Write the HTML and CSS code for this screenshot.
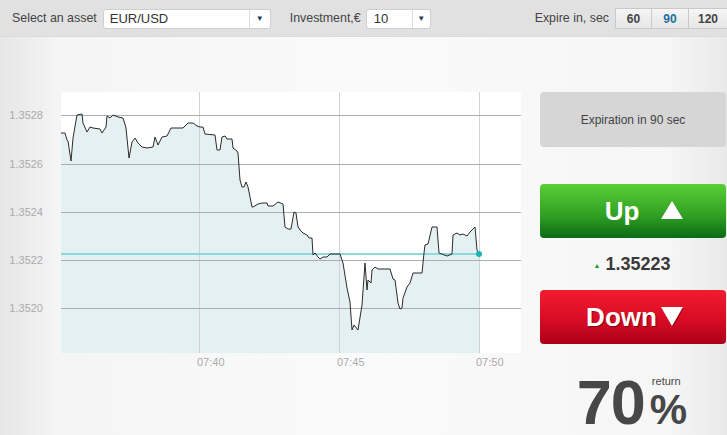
FILE: index.html
```html
<!DOCTYPE html>
<html lang="en">
<head>
  <meta charset="UTF-8">
  <meta name="viewport" content="width=device-width, initial-scale=1.0">
  <title>Binary option</title>
  <link rel="stylesheet" href="styles.css">
</head>
<body>
  <!-- top toolbar -->
  <div class="toolbar">
    <span class="label">Select an asset</span>
    <div class="select select-asset">
      <span class="select-value">EUR/USD</span>
      <span class="select-arrow">&#9660;</span>
    </div>
    <span class="label label-invest">Investment,€</span>
    <div class="select select-invest">
      <span class="select-value">10</span>
      <span class="select-arrow">&#9660;</span>
    </div>
    <span class="label label-expire">Expire in, sec</span>
    <div class="segments">
      <button class="segment">60</button>
      <button class="segment active">90</button>
      <button class="segment">120</button>
    </div>
  </div>

  <div class="main">
    <!-- chart -->
    <div class="chart">
      <svg width="521" height="340" viewBox="0 37 521 340">
        <rect x="61" y="92" width="460" height="261" fill="#fff"/>
        <polygon class="area" points="61,133 65,133 67,140 68,141 71,161 73,138 77,115 82,114 83,123 87,132 90,127 93,128 100,129 102,133 106,127 107,116 110,118 113,115 118,117 123,118 126,128 129,158 132,142 135,138 138,143 142,147 147,148 153,147 155,137 158,145 162,137 167,136 171,128 177,128 183,128 188,123 193,123 197,126 200,127 203,127 205,134 215,135 217,150 220,150 222,137 225,136 227,139 232,139 233,148 237,151 238,153 240,180 242,187 244,187 246,182 248,187 252,207 253,207 258,204 262,203 267,203 268,206 273,206 278,202 283,204 285,227 288,229 291,229 294,212 296,213 298,227 300,230 303,233 307,235 309,238 312,238 313,255 315,253 318,257 320,259 323,257 327,257 330,254 340,254 343,263 347,288 350,302 352,330 354,325 358,330 362,305 365,263 367,290 368,280 371,283 372,270 375,267 378,269 390,269 393,279 395,280 398,303 400,309 402,308 403,298 407,287 410,283 413,273 417,273 422,273 424,253 425,245 428,244 432,227 437,227 439,253 447,256 452,254 453,235 457,233 460,235 463,234 467,236 470,232 475,227 477,250 479,254 479,353 61,353"/>
        <g class="grid-v">
          <line x1="199.5" y1="92" x2="199.5" y2="353"/>
          <line x1="339.5" y1="92" x2="339.5" y2="353"/>
          <line x1="479.5" y1="92" x2="479.5" y2="353"/>
        </g>
        <g class="grid-h">
          <line x1="61" y1="115.5" x2="521" y2="115.5"/>
          <line x1="61" y1="164.5" x2="521" y2="164.5"/>
          <line x1="61" y1="212.5" x2="521" y2="212.5"/>
          <line x1="61" y1="260.5" x2="521" y2="260.5"/>
          <line x1="61" y1="308.5" x2="521" y2="308.5"/>
        </g>
        <line class="current" x1="61" y1="254" x2="479" y2="254"/>
        <polyline class="price" points="61,133 65,133 67,140 68,141 71,161 73,138 77,115 82,114 83,123 87,132 90,127 93,128 100,129 102,133 106,127 107,116 110,118 113,115 118,117 123,118 126,128 129,158 132,142 135,138 138,143 142,147 147,148 153,147 155,137 158,145 162,137 167,136 171,128 177,128 183,128 188,123 193,123 197,126 200,127 203,127 205,134 215,135 217,150 220,150 222,137 225,136 227,139 232,139 233,148 237,151 238,153 240,180 242,187 244,187 246,182 248,187 252,207 253,207 258,204 262,203 267,203 268,206 273,206 278,202 283,204 285,227 288,229 291,229 294,212 296,213 298,227 300,230 303,233 307,235 309,238 312,238 313,255 315,253 318,257 320,259 323,257 327,257 330,254 340,254 343,263 347,288 350,302 352,330 354,325 358,330 362,305 365,263 367,290 368,280 371,283 372,270 375,267 378,269 390,269 393,279 395,280 398,303 400,309 402,308 403,298 407,287 410,283 413,273 417,273 422,273 424,253 425,245 428,244 432,227 437,227 439,253 447,256 452,254 453,235 457,233 460,235 463,234 467,236 470,232 475,227 477,250 479,254"/>
        <circle cx="479" cy="254" r="3" fill="#1bb5b9"/>
        <g class="axis-y">
          <text x="43" y="119">1.3528</text>
          <text x="43" y="168">1.3526</text>
          <text x="43" y="216">1.3524</text>
          <text x="43" y="264">1.3522</text>
          <text x="43" y="312">1.3520</text>
        </g>
        <g class="axis-x">
          <text x="197" y="366">07:40</text>
          <text x="337" y="366">07:45</text>
          <text x="476" y="366">07:50</text>
        </g>
      </svg>
    </div>

    <!-- trade panel -->
    <div class="panel">
      <div class="expiration">Expiration in 90 sec</div>
      <button class="trade up">
        <span>Up</span>
        <svg class="tri" width="22" height="18" viewBox="0 0 22 18"><polygon points="11,0 22,18 0,18" fill="#fff"/></svg>
      </button>
      <div class="quote"><span class="quote-tri">&#9650;</span>1.35223</div>
      <button class="trade down">
        <span>Down</span>
        <svg class="tri" width="23" height="20" viewBox="0 0 23 20"><polygon points="1,1 23,1 12,20" fill="#5a0008" opacity="0.5"/><polygon points="0,0 22,0 11,19" fill="#fff"/></svg>
      </button>
      <div class="payout">
        <span class="payout-num">70</span>
        <span class="payout-side">
          <span class="payout-label">return</span>
          <span class="payout-pct">%</span>
        </span>
      </div>
    </div>
  </div>
</body>
</html>
```

FILE: styles.css
```css
body {
  margin: 0;
  width: 727px;
  height: 435px;
  overflow: hidden;
  font-family: "Liberation Sans", Arial, sans-serif;
  color: #444;
  background: linear-gradient(to right, #e6e6e6 0, #f5f5f5 60px, #fafafa 50%, #f6f6f6 92%, #e9e9e9 100%);
}
.toolbar {
  display: flex;
  align-items: center;
  height: 37px;
  padding-left: 12px;
  background: #e1e1e1;
  box-sizing: border-box;
  border-bottom: 1px solid #dadada;
  font-size: 12.4px;
}
.label {
  color: #444;
  margin-right: 6px;
}
.label-invest {
  margin-left: 19px;
  margin-right: 5px;
}
.label-expire {
  margin-left: auto;
  margin-right: 6px;
}
.select {
  display: flex;
  height: 20px;
  background: #fff;
  border: 1px solid #cfcfcf;
  border-radius: 3px;
  box-sizing: border-box;
  margin-top: 1px;
  font-size: 13px;
}
.select-asset {
  width: 168px;
}
.select-invest {
  width: 65px;
}
.select-value {
  flex: 1;
  padding-left: 6px;
  line-height: 18px;
  color: #333;
}
.select-invest .select-value {
  padding-left: 7px;
}
.select-arrow {
  width: 20px;
  border-left: 1px solid #dcdcdc;
  text-align: center;
  font-size: 8px;
  line-height: 18px;
  color: #1c3f5f;
}
.select-invest .select-arrow {
  width: 17px;
}
.segments {
  display: flex;
  height: 21px;
  margin-top: 1px;
}
.segment {
  width: 37px;
  padding: 0;
  border: 1px solid #c9c9c9;
  border-left: none;
  background: linear-gradient(#f6f6f6, #e6e6e6);
  font-family: inherit;
  font-size: 12px;
  font-weight: bold;
  color: #444;
}
.segment:first-child {
  border-left: 1px solid #c9c9c9;
}
.segment:last-child {
  width: 38px;
  border-right: none;
}
.segment.active {
  color: #1f6f9f;
}
.main {
  display: flex;
}
.chart svg {
  display: block;
}
.area {
  fill: #e5f0f2;
}
.grid-h line {
  stroke: #a9aeae;
  stroke-width: 1;
}
.grid-v line {
  stroke: #d2d2d2;
  stroke-width: 1;
}
.current {
  stroke: #8ad9db;
  stroke-width: 2;
}
.price {
  fill: none;
  stroke: #2b2b2b;
  stroke-width: 1;
}
.axis-y text,
.axis-x text {
  font-family: "Liberation Sans", Arial, sans-serif;
  font-size: 11px;
  fill: #ababab;
}
.axis-y text {
  text-anchor: end;
}
.panel {
  width: 186px;
  margin-left: 19px;
  padding-top: 55px;
  display: flex;
  flex-direction: column;
}
.expiration {
  height: 55px;
  background: #d6d6d6;
  border-radius: 4px;
  display: flex;
  align-items: center;
  justify-content: center;
  font-size: 12px;
  color: #444;
}
.trade {
  height: 54px;
  border: none;
  border-radius: 4px;
  color: #fff;
  font-family: inherit;
  font-size: 26px;
  font-weight: bold;
  padding: 0;
  display: flex;
  align-items: center;
  justify-content: center;
}
.trade.up {
  margin-top: 37px;
  background: linear-gradient(#58cf36, #2f9e22 60%, #0a6a16);
  padding-left: 22px;
}
.trade.up .tri {
  margin-left: 22px;
  margin-top: -3px;
}
.trade.down {
  background: linear-gradient(#f21c30, #d80c24 55%, #ac0018);
  text-shadow: 1px 1px 1px rgba(80, 0, 0, 0.6);
  padding-left: 4px;
}
.trade.down .tri {
  margin-left: 4px;
  margin-top: -1px;
}
.quote {
  height: 52px;
  display: flex;
  align-items: center;
  justify-content: center;
  font-size: 18px;
  font-weight: bold;
  color: #3a3a3a;
  padding-right: 2px;
}
.quote-tri {
  font-size: 7px;
  color: #1c9a2a;
  margin-right: 5px;
  margin-top: 3px;
}
.payout {
  display: flex;
  justify-content: center;
  align-items: flex-start;
  margin-top: 34px;
  padding-right: 2px;
  color: #474747;
}
.payout-num {
  font-size: 63px;
  font-weight: bold;
  line-height: 48px;
  letter-spacing: -1px;
}
.payout-side {
  display: flex;
  flex-direction: column;
  margin-left: 5px;
}
.payout-label {
  font-size: 11px;
  line-height: 12px;
  margin-top: -3px;
  padding-left: 2px;
}
.payout-pct {
  font-size: 42px;
  font-weight: bold;
  line-height: 34px;
  margin-top: 6px;
}
```
